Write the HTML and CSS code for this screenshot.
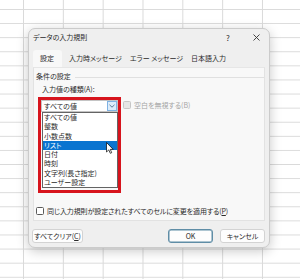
FILE: index.html
```html
<!DOCTYPE html>
<html lang="ja">
<head>
  <meta charset="UTF-8">
  <meta name="viewport" content="width=device-width, initial-scale=1.0">
  <title>データの入力規則</title>
  <link rel="stylesheet" href="styles.css">
</head>
<body>
  <div class="dialog">
    <div class="titlebar">
      <span class="title">データの入力規則</span>
      <span class="help">?</span>
      <span class="close">
        <svg width="7" height="7" viewBox="0 0 7 7"><path d="M0.5 0.5L6.5 6.5M6.5 0.5L0.5 6.5" stroke="#333" stroke-width="0.9" fill="none"/></svg>
      </span>
    </div>
    <div class="tabs">
      <span class="tab active">設定</span>
      <span class="tab">入力時メッセージ</span>
      <span class="tab">エラー メッセージ</span>
      <span class="tab">日本語入力</span>
    </div>
    <div class="panel">
      <div class="group"><span>条件の設定</span><i class="rule"></i></div>
      <div class="label">入力値の種類(A):</div>
      <div class="row">
        <div class="highlight">
          <div class="combo">
            <span class="value">すべての値</span>
            <span class="drop">
              <svg width="6" height="4" viewBox="0 0 6 4"><path d="M0.5 0.8L3 3.2L5.5 0.8" stroke="#4b6e8c" stroke-width="0.9" fill="none"/></svg>
            </span>
          </div>
          <ul class="list">
            <li>すべての値</li>
            <li>整数</li>
            <li>小数点数</li>
            <li class="selected">リスト</li>
            <li>日付</li>
            <li>時刻</li>
            <li>文字列(長さ指定)</li>
            <li>ユーザー設定</li>
            <svg class="cursor" width="8" height="12" viewBox="0 0 8 12"><path d="M0.5 0.5L0.5 10L2.8 7.9L4.3 11.3L5.7 10.7L4.3 7.4L7.2 7.4Z" fill="#fff" stroke="#000" stroke-width="0.7" stroke-linejoin="round"/></svg>
          </ul>
        </div>
        <div class="check disabled"><span class="box"></span>空白を無視する(B)</div>
      </div>
      <div class="check apply"><span class="box"></span>同じ入力規則が設定されたすべてのセルに変更を適用する(<u>P</u>)</div>
    </div>
    <div class="buttons">
      <button class="btn clear">すべてクリア(<u>C</u>)</button>
      <button class="btn ok">OK</button>
      <button class="btn">キャンセル</button>
    </div>
  </div>
</body>
</html>
```

FILE: styles.css
```css
body {
  margin: 0;
  width: 300px;
  height: 279px;
  overflow: hidden;
  font-family: "Noto Sans CJK JP", "Noto Sans", sans-serif;
  font-feature-settings: "palt";
  font-size: 7px;
  color: #2a2a2a;
  background-color: #ffffff;
  background-image:
    linear-gradient(to right, #dadada 1px, transparent 1px),
    linear-gradient(to bottom, #dadada 1px, transparent 1px);
  background-size: 39.83px 14.1px;
  background-position: 23px 9px;
}
.dialog {
  margin: 28px 0 0 28px;
  width: 242px;
  box-sizing: border-box;
  background-color: #efefef;
  border: 1px solid #cbcbcb;
  border-radius: 7px;
  box-shadow: 0 3px 12px rgba(0, 0, 0, 0.22);
  padding: 0 4px 4px 4px;
}
.titlebar {
  display: flex;
  align-items: center;
  height: 13px;
  margin-bottom: 6px;
  line-height: 9px;
  padding-top: 2px;
}
.title {
  flex: 1;
}
.help {
  width: 10px;
  text-align: center;
  font-size: 8px;
  margin-right: 18px;
}
.close {
  width: 10px;
  display: flex;
  justify-content: center;
  margin-right: 4px;
}
.tabs {
  display: flex;
  height: 17px;
  line-height: 17px;
}
.tab {
  padding: 0 4px;
  white-space: nowrap;
}
.tab.active {
  padding: 0 8px 0 7px;
  background-color: #f8f8f8;
  border-radius: 3px 3px 0 0;
  margin-right: 3px;
}
.panel {
  background-color: #f8f8f8;
  border: 1px solid #e2e2e2;
  border-top-color: #e6e6e6;
  padding: 4px 0 4px 2px;
}
.group {
  display: flex;
  align-items: center;
  line-height: 9px;
}
.rule {
  flex: 1;
  height: 1px;
  margin: 1px 0 0 4px;
  background-color: #e0e0e0;
}
.label {
  margin: 4px 0 0 6px;
  line-height: 9px;
}
.row {
  display: flex;
  align-items: flex-start;
  margin: 3px 0 0 2px;
}
.highlight {
  width: 83px;
  box-sizing: border-box;
  border: 3px solid #d7141d;
  padding-bottom: 2px;
}
.combo {
  display: flex;
  align-items: center;
  height: 12px;
  box-sizing: border-box;
  background-color: #ffffff;
  border: 1px solid #c4c4c4;
}
.value {
  flex: 1;
  padding-left: 2px;
  line-height: 10px;
}
.drop {
  width: 10px;
  height: 10px;
  box-sizing: border-box;
  display: flex;
  align-items: center;
  justify-content: center;
  background-color: #dcecfb;
  border: 1px solid #7fb2e3;
}
.list {
  position: relative;
  list-style: none;
  margin: 0 0 0 1px;
  padding: 0;
  width: 76px;
  box-sizing: border-box;
  background-color: #ffffff;
  border: 1px solid #646464;
}
.list li {
  height: 9.3px;
  line-height: 9.3px;
  padding-left: 1px;
  white-space: nowrap;
}
.list li.selected {
  background-color: #0a74d0;
  color: #ffffff;
}
.cursor {
  position: absolute;
  left: 63px;
  top: 29px;
}
.check {
  display: flex;
  align-items: center;
  line-height: 10px;
  white-space: nowrap;
}
.box {
  width: 8px;
  height: 8px;
  box-sizing: border-box;
  border: 1px solid #5a5a5a;
  border-radius: 1.5px;
  background-color: #ffffff;
  margin-right: 3px;
}
.check.disabled {
  color: #a5a5a5;
  margin: 3px 0 0 2px;
}
.check.disabled .box {
  border-color: #c6c6c6;
  background-color: #e6e6e6;
}
.check.apply {
  margin-top: 13px;
  letter-spacing: -0.1px;
}
.buttons {
  display: flex;
  margin-top: 8px;
}
.btn {
  height: 14px;
  width: 45px;
  padding: 0;
  font-family: inherit;
  font-feature-settings: "palt";
  font-size: 7px;
  color: #2a2a2a;
  background-color: #fdfdfd;
  border: 1px solid #d3d3d3;
  border-radius: 3px;
  margin-left: 7px;
}
.btn.clear {
  width: 51px;
  margin-left: -1px;
  margin-right: auto;
}
.btn.ok {
  border-color: #5f8da6;
  box-shadow: inset 0 0 0 0.5px #5f8da6;
}
```
